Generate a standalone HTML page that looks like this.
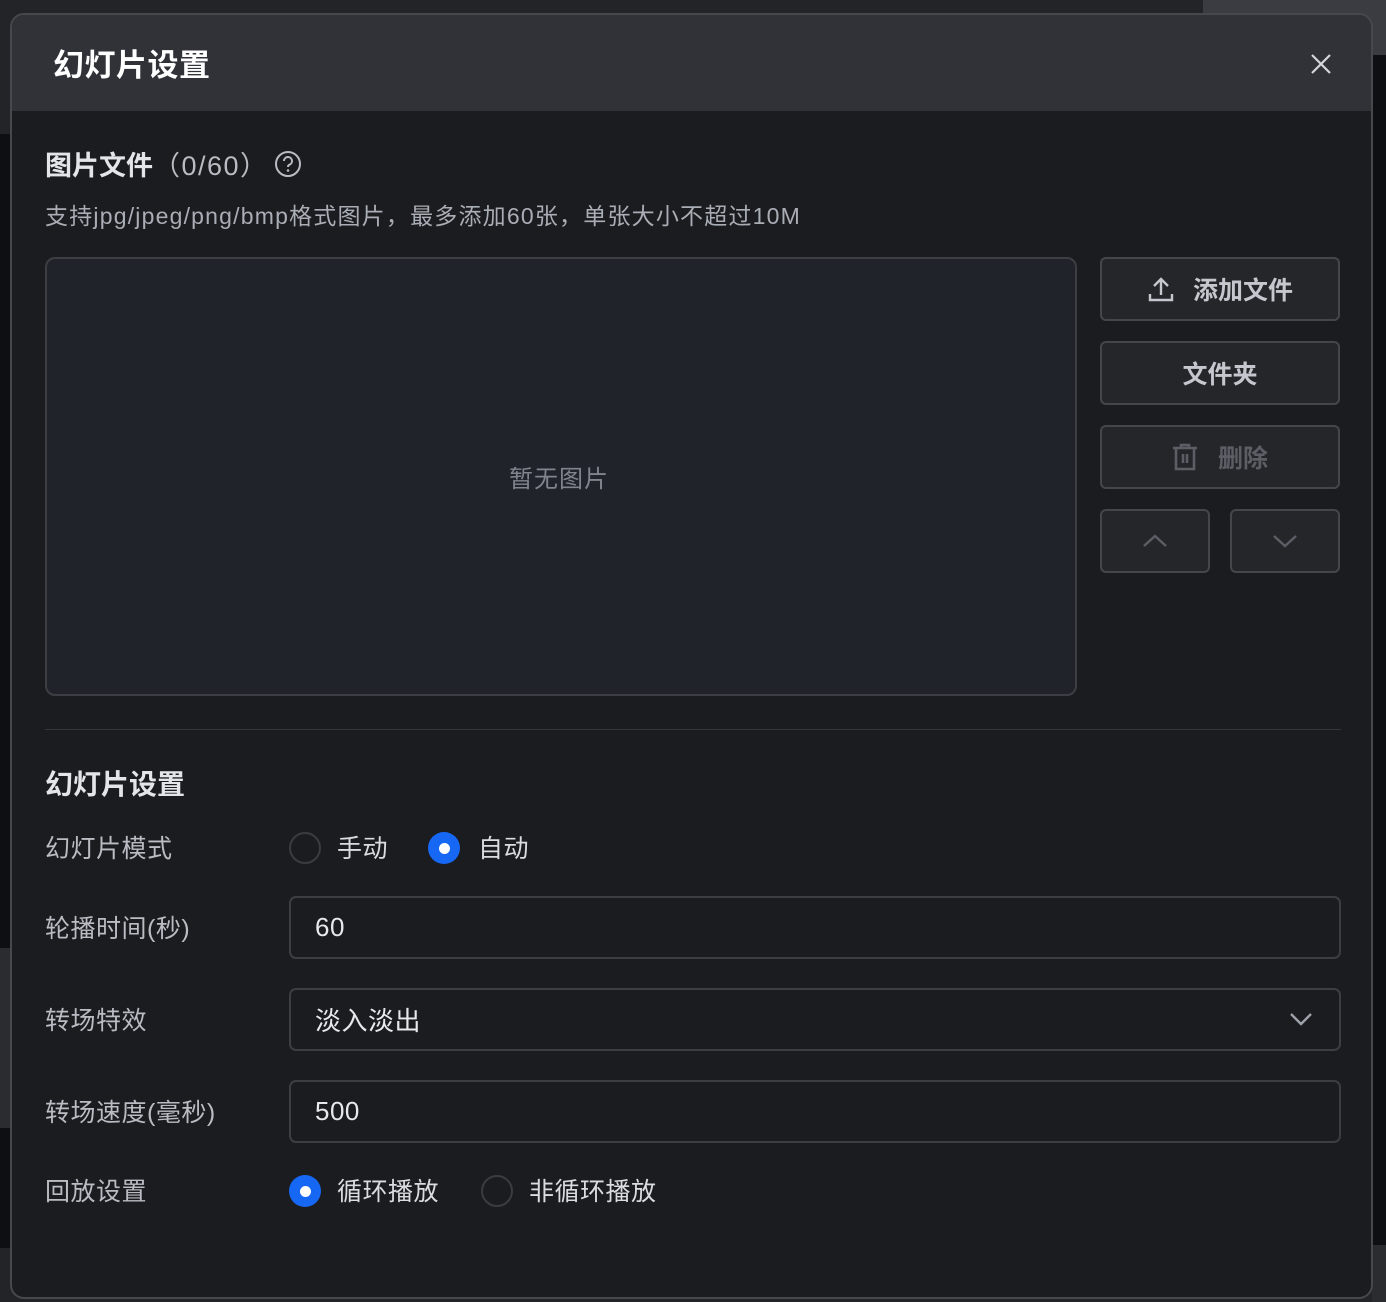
<!DOCTYPE html>
<html><head><meta charset="utf-8">
<style>
*{box-sizing:border-box;margin:0;padding:0}
html,body{width:1386px;height:1302px;overflow:hidden;background:#232427;font-family:"Liberation Sans","Noto Sans CJK SC",sans-serif}
.abs{position:absolute}
.bgL1{left:0;top:134px;width:12px;height:814px;background:#0e0f12}
.bgL2{left:0;top:948px;width:12px;height:180px;background:#2b2c30}
.bgL3{left:0;top:1128px;width:12px;height:120px;background:#0e0f12}
.bgR{left:1203px;top:0;width:183px;height:55px;background:#3a3c41}
.bgR2{left:1372px;top:55px;width:14px;height:1190px;background:#0e0f12}
.bgR3{left:1372px;top:1245px;width:14px;height:57px;background:#2b2c30}
.dlg{left:10px;top:13px;width:1363px;height:1286px;background:#1b1c20;border:2px solid #46484e;border-radius:14px;overflow:hidden}
.hdr{left:0;top:0;width:100%;height:96px;background:#303238}
.t{color:#fff;font-size:31px;font-weight:bold;left:41px;top:25px;letter-spacing:0.5px}
.lab{color:#b9bcc3;font-size:25px;letter-spacing:0.5px}
.btn{border:2px solid #44464c;background:#25262a;border-radius:6px;display:flex;align-items:center;justify-content:center;font-size:25px;font-weight:bold;color:#c4c7ce}
.inp{left:277px;width:1052px;height:63px;border:2px solid #3c3e44;border-radius:7px;color:#e6e8ec;font-size:26px;padding-left:24px;display:flex;align-items:center;letter-spacing:0.5px}
.rad{width:32px;height:32px;border-radius:50%;border:2px solid #3a3c42}
.on{background:#1767f5;border:none;display:flex;align-items:center;justify-content:center}
.on::after{content:"";width:11px;height:11px;border-radius:50%;background:#fff}
.rt{color:#d9dce1;font-size:25px;letter-spacing:0.5px}
</style></head><body>
<div class="abs bgL1"></div><div class="abs bgL2"></div><div class="abs bgL3"></div>
<div class="abs bgR"></div><div class="abs bgR2"></div><div class="abs bgR3"></div>
<div class="abs dlg">
 <div class="abs hdr"></div>
 <div class="abs t">幻灯片设置</div>
 <svg class="abs" style="left:1298px;top:38px" width="22" height="22" viewBox="0 0 22 22"><path d="M2 2L20 20M20 2L2 20" stroke="#d4d6db" stroke-width="2.2"/></svg>

 <div class="abs" style="left:33px;top:129px;font-size:27px;color:#e3e5e9"><b>图片文件</b><span style="color:#b9bcc3;letter-spacing:1.5px">（0/60）</span></div>
 <svg class="abs" style="left:262px;top:135px" width="28" height="28" viewBox="0 0 28 28"><circle cx="14" cy="14" r="12" fill="none" stroke="#b9bcc3" stroke-width="2"/><path d="M10 11a4 4 0 1 1 5.5 3.7c-1 .5-1.5 1-1.5 2.3" fill="none" stroke="#b9bcc3" stroke-width="2"/><circle cx="14" cy="20.5" r="1.3" fill="#b9bcc3"/></svg>
 <div class="abs lab" style="left:33px;top:182px;font-size:23px;color:#a9adb5;letter-spacing:1.2px">支持jpg/jpeg/png/bmp格式图片，最多添加60张，单张大小不超过10M</div>

 <div class="abs" style="left:33px;top:242px;width:1032px;height:439px;border:2px solid #3c3e44;border-radius:10px;background:#20232a"></div>
 <div class="abs" style="left:497px;top:444px;font-size:24px;color:#80848c;letter-spacing:1px">暂无图片</div>

 <div class="abs btn" style="left:1088px;top:242px;width:240px;height:64px"><svg width="28" height="28" viewBox="0 0 28 28" style="margin-right:18px"><path d="M3 19v6h22v-6M14 20V4M7 11l7-7 7 7" fill="none" stroke="#c4c7ce" stroke-width="2.4"/></svg>添加文件</div>
 <div class="abs btn" style="left:1088px;top:326px;width:240px;height:64px">文件夹</div>
 <div class="abs btn" style="left:1088px;top:410px;width:240px;height:64px;color:#5b5e65"><svg width="26" height="28" viewBox="0 0 26 28" style="margin-right:20px"><path d="M1 5h24M9 5V2h8v3M4 5v21h18V5M11 11v9M15 11v9" fill="none" stroke="#5b5e65" stroke-width="2.6"/></svg>删除</div>
 <div class="abs btn" style="left:1088px;top:494px;width:110px;height:64px"><svg width="26" height="16" viewBox="0 0 26 16"><path d="M2 13L13 3l11 10" fill="none" stroke="#5b5e65" stroke-width="2.4"/></svg></div>
 <div class="abs btn" style="left:1218px;top:494px;width:110px;height:64px"><svg width="26" height="16" viewBox="0 0 26 16"><path d="M2 3l11 10L24 3" fill="none" stroke="#5b5e65" stroke-width="2.4"/></svg></div>

 <div class="abs" style="left:33px;top:714px;width:1296px;height:1px;background:#34363b"></div>
 <div class="abs" style="left:33px;top:748px;font-size:28px;font-weight:bold;color:#e3e5e9">幻灯片设置</div>

 <div class="abs lab" style="left:33px;top:814px">幻灯片模式</div>
 <div class="abs rad" style="left:277px;top:817px"></div>
 <div class="abs rt" style="left:325px;top:814px">手动</div>
 <div class="abs rad on" style="left:416px;top:817px"></div>
 <div class="abs rt" style="left:466px;top:814px">自动</div>

 <div class="abs lab" style="left:33px;top:894px">轮播时间(秒)</div>
 <div class="abs inp" style="top:881px">60</div>

 <div class="abs lab" style="left:33px;top:986px">转场特效</div>
 <div class="abs inp" style="top:973px">淡入淡出</div>
 <svg class="abs" style="left:1277px;top:996px" width="24" height="16" viewBox="0 0 24 16"><path d="M2 3l10 10L22 3" fill="none" stroke="#9ea2aa" stroke-width="2.4"/></svg>

 <div class="abs lab" style="left:33px;top:1078px">转场速度(毫秒)</div>
 <div class="abs inp" style="top:1065px">500</div>

 <div class="abs lab" style="left:33px;top:1157px">回放设置</div>
 <div class="abs rad on" style="left:277px;top:1160px"></div>
 <div class="abs rt" style="left:325px;top:1157px">循环播放</div>
 <div class="abs rad" style="left:469px;top:1160px"></div>
 <div class="abs rt" style="left:517px;top:1157px">非循环播放</div>
</div>
</body></html>
